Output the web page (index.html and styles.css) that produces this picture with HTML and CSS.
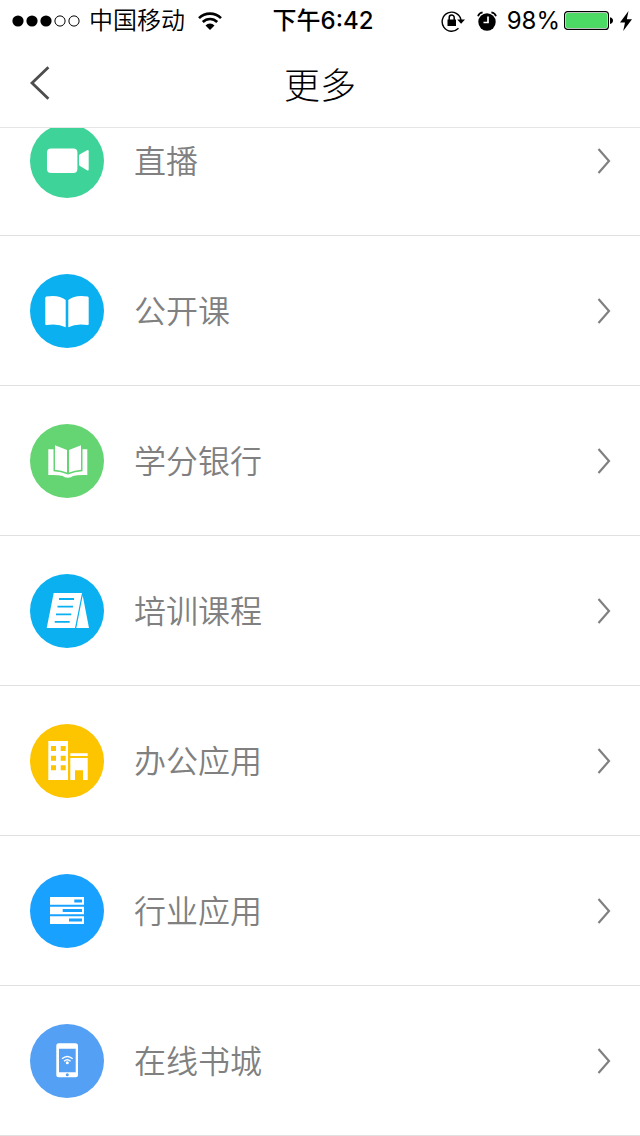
FILE: index.html
```
<!DOCTYPE html>
<html lang="zh-CN">
<head>
	<meta charset="utf-8">
	<meta name="viewport" content="width=device-width, initial-scale=1">
	<title>更多</title>
	<link rel="stylesheet" href="styles.css">
</head>
<body>
	<header class="header">
		<div class="status">
			<div class="status-left">
				<svg class="signal" viewBox="0 0 70 12">
					<circle cx="6" cy="6" r="5.6"/>
					<circle cx="20" cy="6" r="5.6"/>
					<circle cx="34" cy="6" r="5.6"/>
					<circle class="off" cx="48" cy="6" r="5.1"/>
					<circle class="off" cx="62" cy="6" r="5.1"/>
				</svg>
				<span class="carrier">中国移动</span>
				<svg class="wifi" viewBox="0 0 24 18">
					<path d="M1 6.2a15.6 15.6 0 0 1 22 0M4.8 10a10.2 10.2 0 0 1 14.4 0" fill="none" stroke="#000" stroke-width="2.6"/>
					<path d="M12 18l-4.5-4.6a6.4 6.4 0 0 1 9 0z"/>
				</svg>
			</div>
			<span class="time">下午6:42</span>
			<div class="status-right">
				<svg class="lock" viewBox="0 0 24 22">
					<path d="M17.5 18.3A9.5 9.5 0 1 1 20 10" fill="none" stroke="#000" stroke-width="1.4"/>
					<path d="M16.2 9.5h7.8l-3.9 4.3z"/>
					<path d="M6.5 9.5h8.5v6.5h-8.5z"/>
					<path d="M8.2 10V7.5a2.5 2.5 0 0 1 5 0V10" fill="none" stroke="#000" stroke-width="1.5"/>
				</svg>
				<svg class="alarm" viewBox="0 0 20 20">
					<circle cx="10" cy="11" r="8.7"/>
					<path d="M1 5.2Q2 2 5.6 1.4M19 5.2Q18 2 14.4 1.4" fill="none" stroke="#000" stroke-width="1.7"/>
					<path d="M11 5.5v6H6.5" fill="none" stroke="#fff" stroke-width="1.7"/>
				</svg>
				<span>98%</span>
				<svg class="battery" viewBox="0 0 50 20">
					<rect x=".6" y=".6" width="43.8" height="17.8" rx="3" fill="none" stroke="#000" stroke-width="1.2"/>
					<rect x="2" y="2" width="41" height="15" rx="1.5" fill="#4cd964"/>
					<path d="M46 6.2q3 .6 3 3.4t-3 3.4z"/>
				</svg>
				<svg class="bolt" viewBox="0 0 12 20">
					<path d="M8.5 0L0 11.5h5L3.2 20 12 8.2H6.8z"/>
				</svg>
			</div>
		</div>
		<nav class="nav">
			<button class="back" aria-label="返回">
				<svg viewBox="0 0 20 34"><path d="M18.4 1.2L2 17l16.4 15.8"/></svg>
			</button>
			<h1>更多</h1>
		</nav>
	</header>

	<main class="content">
		<ul class="list">
			<li>
				<a class="row" href="#live">
					<svg class="icon green" viewBox="0 0 74 74">
						<rect x="17" y="24.5" width="30.4" height="24.5" rx="4"/>
						<path d="M49 32q0-1 1-1.7l7-4q1.7-.8 1.7.8v18.3q0 1.6-1.7.8l-7-4.2q-1-.7-1-1.7z"/>
					</svg>
					<span class="label">直播</span>
					<svg class="arrow" viewBox="0 0 14 26"><path d="M1.5 1L12 13 1.5 25"/></svg>
				</a>
			</li>
			<li>
				<a class="row" href="#open">
					<svg class="icon sky" viewBox="0 0 74 74">
						<path d="M15.3 23.8q0-1 1-1.2 12-2.4 19.4 3.4v27.3q-8-4-19.2-2.2-1.2.2-1.2-1z"/>
						<path d="M58.7 23.8q0-1-1-1.2-12-2.4-19.4 3.4v27.3q8-4 19.2-2.2 1.2.2 1.2-1z"/>
					</svg>
					<span class="label">公开课</span>
					<svg class="arrow" viewBox="0 0 14 26"><path d="M1.5 1L12 13 1.5 25"/></svg>
				</a>
			</li>
			<li>
				<a class="row" href="#credit">
					<svg class="icon lime" viewBox="0 0 74 74">
						<path d="M18.3 25.3h5.2v21.9q7.500.3 14.500 3.200 7-2.900 14.500-3.200V25.300h4.800V51q-9.300-.5-14.300 1-1.500 1.700-5.200 1.700T32.700 52q-5-1.500-14.400-1z"/>
						<path d="M25 21.300L37 26v22.600q-5.500-2.300-12-2.800zM51 21.300L39 26v22.600q5.500-2.300 12-2.800z"/>
					</svg>
					<span class="label">学分银行</span>
					<svg class="arrow" viewBox="0 0 14 26"><path d="M1.5 1L12 13 1.5 25"/></svg>
				</a>
			</li>
			<li>
				<a class="row" href="#training">
					<svg class="icon sky" viewBox="0 0 74 74">
						<path d="M23.700 19H52l-7 35H16.700zM52.700 21.500L59 54H46.300z"/>
						<path class="line" d="M29 25h15M27.500 32.700H43M26 40.300h15.300M24.700 47.800h15"/>
					</svg>
					<span class="label">培训课程</span>
					<svg class="arrow" viewBox="0 0 14 26"><path d="M1.5 1L12 13 1.5 25"/></svg>
				</a>
			</li>
			<li>
				<a class="row" href="#office">
					<svg class="icon yellow" viewBox="0 0 74 74">
						<path d="M18.300 17H38v39H18.300zM40.300 29.300h17.400V32H40.300zM40.300 34h17.400v22H53v-9.700h-8V56h-4.700z"/>
						<path class="hole" d="M21 22h5v5h-5zM30.700 22h5v5h-5zM21 31.700h5v5h-5zM30.700 31.700h5v5h-5zM21 41.300h5v5h-5zM30.700 41.300h5v5h-5z"/>
					</svg>
					<span class="label">办公应用</span>
					<svg class="arrow" viewBox="0 0 14 26"><path d="M1.5 1L12 13 1.5 25"/></svg>
				</a>
			</li>
			<li>
				<a class="row" href="#industry">
					<svg class="icon blue" viewBox="0 0 74 74">
						<path d="M20 23h34v7.700H20zM20 32.700h34v7.600H20zM20 42.200h34V50H20z"/>
						<path class="hole" d="M44.300 25.500H52v3h-7.700zM32.700 35H52v3H32.700zM39 44.500h13v3H39z"/>
					</svg>
					<span class="label">行业应用</span>
					<svg class="arrow" viewBox="0 0 14 26"><path d="M1.5 1L12 13 1.5 25"/></svg>
				</a>
			</li>
			<li>
				<a class="row" href="#books">
					<svg class="icon soft" viewBox="0 0 74 74">
						<rect x="26.300" y="19.200" width="21.700" height="34" rx="2.500"/>
						<path class="hole" d="M29 24.700h16.700v23.600H29z"/>
						<circle class="hole" cx="37.300" cy="50.700" r="1.500"/>
						<path class="wave" d="M32 34.800q5.300-4.600 10.600 0M34 37.200q3.300-2.800 6.600 0"/>
						<circle cx="37.300" cy="38.800" r="1.500"/>
					</svg>
					<span class="label">在线书城</span>
					<svg class="arrow" viewBox="0 0 14 26"><path d="M1.5 1L12 13 1.5 25"/></svg>
				</a>
			</li>
		</ul>
	</main>
</body>
</html>
```
FILE: styles.css
```
* {
	box-sizing: border-box;
}

body {
	margin: 0;
	height: 100vh;
	display: flex;
	flex-direction: column;
	background: #fff;
	color: #000;
	font-family: Inter, "Noto Sans CJK SC", sans-serif;
	overflow: hidden;
}

.header {
	flex: none;
	border-bottom: 1px solid #e5e5e5;
}

/* status bar */
.status {
	display: grid;
	grid-template-columns: 1fr auto 1fr;
	align-items: center;
	height: 41px;
	padding: 0 8px 0 12px;
	font-size: 24px;
	line-height: 40px;
}

.status-left,
.status-right {
	display: flex;
	align-items: center;
}

.status-left {
	gap: 7px;
}

.status-right {
	justify-content: flex-end;
	gap: 4px;
}

.carrier {
	font-weight: 350;
}

.time {
	padding-left: 2px;
	font-weight: 500;
}

.signal {
	width: 70px;
	height: 12px;
}

.off {
	fill: none;
	stroke: #000;
}

.wifi {
	width: 24px;
	height: 18px;
	margin-left: 6px;
}

.lock {
	width: 24px;
	height: 22px;
}

.alarm {
	width: 20px;
	height: 20px;
	margin: 0 6px 0 8px;
}

.battery {
	width: 50px;
	height: 20px;
}

.bolt {
	width: 12px;
	height: 20px;
	margin-left: 2px;
}

/* title bar */
.nav {
	display: grid;
	grid-template-columns: 1fr auto 1fr;
	align-items: center;
	height: 86px;
	padding: 0 30px 3px;
}

.nav h1 {
	margin: 0;
	font-size: 36px;
	font-weight: 300;
}

.back {
	justify-self: start;
	padding: 0;
	border: 0;
	background: none;
	cursor: pointer;
}

.back svg {
	display: block;
	width: 20px;
	height: 34px;
	fill: none;
	stroke: #4d4d4d;
	stroke-width: 2.8;
}

/* the list is scrolled a little, its first row runs under the header */
.content {
	flex: 1;
	min-height: 0;
	overflow: hidden;
}

.list {
	list-style: none;
	margin: -42px 0 0;
	padding: 0;
}

.row {
	display: flex;
	align-items: center;
	padding: 38px 29px 37px 30px;
	border-bottom: 1px solid #e0e0e0;
	color: #808080;
	text-decoration: none;
}

.label {
	flex: 1;
	padding-top: 2px;
	margin-left: 30px;
	font-size: 32px;
	font-weight: 350;
	line-height: 48px;
}

.arrow {
	width: 14px;
	height: 26px;
	fill: none;
	stroke: #808080;
	stroke-width: 2.2;
}

.icon {
	width: 74px;
	height: 74px;
	border-radius: 50%;
	background: currentColor;
	fill: #fff;
}

.hole {
	fill: currentColor;
}

.line {
	fill: none;
	stroke: currentColor;
	stroke-width: 1.8;
}

.wave {
	fill: none;
	stroke: #fff;
	stroke-width: 1.4;
}

.green {
	color: #3dd399;
}

.sky {
	color: #0ab0f0;
}

.lime {
	color: #65d472;
}

.yellow {
	color: #fdc400;
}

.blue {
	color: #18a1ff;
}

.soft {
	color: #54a0f4;
}
```
